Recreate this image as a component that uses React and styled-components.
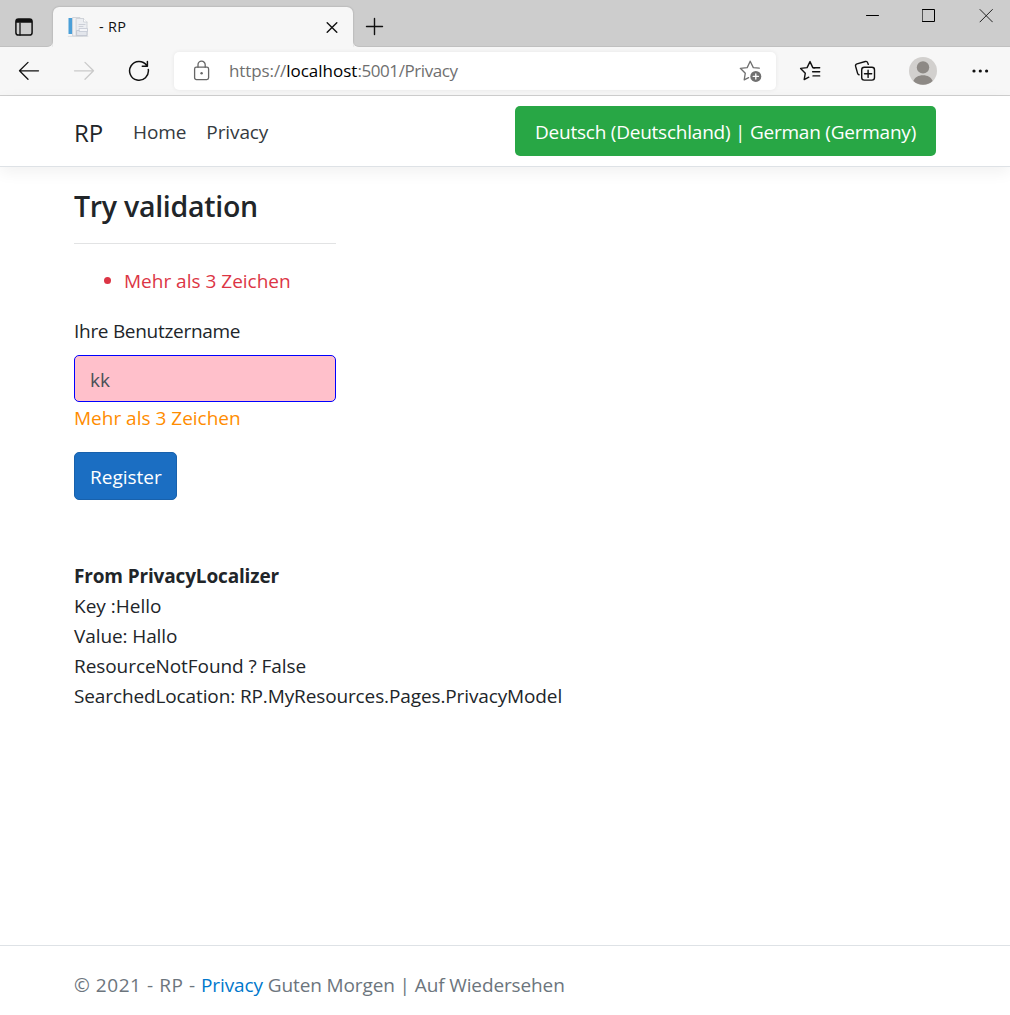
import React from "react";
import styled, { createGlobalStyle } from "styled-components";

const Global = createGlobalStyle`
  *, *::before, *::after { box-sizing: border-box; }
  html, body { margin: 0; padding: 0; overflow: hidden; }
  body {
    background: #fff;
    color: #212529;
    font-family: "Open Sans", "Noto Sans", sans-serif;
    font-size: 19px;
    line-height: 30px;
  }
`;

const Text = styled.span`
  white-space: pre;
  line-height: 1;
  vertical-align: ${(p) => (p.$drop === undefined ? -1 : -p.$drop)}px;
  letter-spacing: ${(p) => p.$ls || 0}px;
`;

const Icon = styled.svg`
  display: block;
  flex: none;
  fill: none;
  stroke: ${(p) => p.$color || "#111"};
  stroke-width: ${(p) => p.$weight || 1.3};
  stroke-linecap: round;
  stroke-linejoin: round;
`;

const Page = styled.div`
  width: 1010px;
  height: 1015px;
  display: flex;
  flex-direction: column;
  overflow: hidden;
`;

/* Browser chrome */
const TabStrip = styled.div`
  height: 47px;
  background: #f7f7f7;
  display: flex;
  flex: none;
`;
const TabMenu = styled.div`
  width: 53px;
  display: flex;
  align-items: flex-start;
  padding: 18px 0 0 15px;
  background: #cdcdcd;
  border-bottom: 1px solid #c0c0c0;
  border-bottom-right-radius: 6px;
`;
const TabWell = styled.div`
  background: #cdcdcd;
  padding-top: 7px;
`;
const Tab = styled.div`
  width: 300px;
  height: 40px;
  background: #f7f7f7;
  border-radius: 6px 6px 0 0;
  box-shadow: 0 0 2px rgba(0, 0, 0, 0.25);
  clip-path: inset(-3px -3px 0 -3px);
  display: flex;
  align-items: center;
  padding: 0 15px 0 14px;
`;
const TabTitle = styled.div`
  flex: 1;
  font-size: 14.5px;
  line-height: 20px;
  color: #111;
  padding-left: 10px;
`;
const StripRest = styled.div`
  flex: 1;
  display: flex;
  justify-content: space-between;
  align-items: flex-start;
  padding: 8px 17px 0 12px;
  background: #cdcdcd;
  border-bottom: 1px solid #c0c0c0;
  border-bottom-left-radius: 6px;
`;
const NewTab = styled.div`
  padding-top: 9px;
`;
const WindowButtons = styled.div`
  display: flex;
  gap: 43px;
`;
const Toolbar = styled.div`
  height: 49px;
  background: #f7f7f7;
  border-bottom: 1px solid #cfcfcf;
  display: flex;
  align-items: center;
  flex: none;
  padding-left: 18px;
`;
const NavButtons = styled.div`
  display: flex;
  align-items: center;
  gap: 33px;
  width: 156px;
`;
const Address = styled.div`
  width: 602px;
  height: 38px;
  background: #fff;
  border-radius: 5px;
  box-shadow: 0 0 4px rgba(0, 0, 0, 0.07);
  display: flex;
  align-items: center;
  padding: 0 13px 0 19px;
`;
const Url = styled.div`
  flex: 1;
  padding-left: 19px;
  font-size: 17px;
  line-height: 24px;
  color: #6f6f6f;
`;
const Host = styled.b`
  font-weight: 400;
  color: #000;
`;
const Tools = styled.div`
  display: flex;
  align-items: center;
  gap: 33px;
  padding-left: 23px;
`;

/* Site */
const Header = styled.header`
  height: 71px;
  border-bottom: 1px solid #dee2e6;
  box-shadow: 0 5px 15px rgba(0, 0, 0, 0.06);
  padding: 0 74px;
  display: flex;
  align-items: center;
  flex: none;
`;
const Brand = styled.a`
  font-size: 24px;
  width: 59px;
`;
const NavLink = styled.a`
  color: #343a40;
  margin-right: 20px;
`;
const Culture = styled.div`
  margin-left: auto;
  width: 421px;
  height: 50px;
  border-radius: 5px;
  background: #28a745;
  color: #fff;
  padding: 10px 20px;
`;
const Main = styled.main`
  flex: 1;
  padding: 20px 74px 0;
`;
const Form = styled.form`
  width: 262px;
`;
const Title = styled.h4`
  margin: 0;
  font-size: 28.5px;
  line-height: 36px;
  font-weight: 600;
`;
const Rule = styled.hr`
  border: 0;
  border-top: 1px solid #e2e3e4;
  margin: 20px 0 21px;
`;
const Errors = styled.ul`
  margin: 0 0 20px;
  padding-left: 50px;
  color: #dc3545;
`;
const Label = styled.label`
  display: block;
  margin-bottom: 10px;
`;
const Input = styled.div`
  height: 47px;
  border: 1px solid #0000ff;
  border-radius: 5px;
  background: #ffc0cb;
  color: #495057;
  padding: 8px 15px;
`;
const FieldError = styled.div`
  color: #ff8c00;
  margin-bottom: 20px;
`;
const Submit = styled.button`
  display: block;
  width: 103px;
  height: 48px;
  background: #1b6ec2;
  border: 1px solid #1861ac;
  border-radius: 5px;
  color: #fff;
  font: inherit;
  padding: 0 0 0 15px;
  text-align: left;
`;
const Info = styled.section`
  margin-top: 60px;
`;
const Line = styled.div`
  font-weight: ${(p) => (p.$bold ? 700 : 400)};
`;
const Footer = styled.footer`
  height: 70px;
  border-top: 1px solid #dee2e6;
  padding: 0 74px;
  line-height: 77px;
  color: #6c757d;
  flex: none;
`;
const Link = styled.a`
  color: #0077cc;
`;

export default function App() {
  return (
    <Page>
      <Global />
      <TabStrip>
        <TabMenu>
          <Icon width="18" height="18" viewBox="0 0 18 18" $weight={1.5}>
            <rect x="0.9" y="0.9" width="16.2" height="16.2" rx="2.6" />
            <path d="M1 4.7V3a2 2 0 0 1 2-2h12a2 2 0 0 1 2 2v1.7z" fill="#111" stroke="none" />
            <path d="M5 5v12" strokeWidth="1.3" />
          </Icon>
        </TabMenu>
        <TabWell>
          <Tab>
            <Icon width="22" height="22" viewBox="0 0 22 22" $weight={0.8} $color="#c9cdd3">
              <path d="M6 1.5h7l3 3V20H6z" fill="#f1f2f4" />
              <path d="M9.5 2.5h7l3.5 3.5v14H9.5z" fill="#eceef2" />
              <path d="M16.5 2.5V6H20" fill="#fff" />
              <path d="M12 8.5h6M12 10.5h4" stroke="#c3c7cf" />
              <path d="M10 14.5h10v5H10z" fill="#e3e6ec" stroke="#bcc1cd" />
              <path d="M12.5 12.5h8v3h-8z" fill="#f4f5f8" stroke="#c3c8d3" />
              <rect x="1.5" y="2" width="3.6" height="16" fill="#4a9fd8" stroke="none" />
              <path d="M1.3 20.4h19.6" stroke="#d6d9dd" />
            </Icon>
            <TabTitle><Text $drop={0} $ls={0.3}>- RP</Text></TabTitle>
            <Icon width="12" height="12" viewBox="0 0 12 12" $weight={1.4}>
              <path d="M1.2 1.7l9.6 9.6M10.8 1.7L1.2 11.3" />
            </Icon>
          </Tab>
        </TabWell>
        <StripRest>
          <NewTab>
            <Icon width="19" height="19" viewBox="0 0 19 19" $weight={1.4}>
              <path d="M9.5 1.5v16M1.5 9.5h16" />
            </Icon>
          </NewTab>
          <WindowButtons>
            <Icon width="14" height="15" viewBox="0 0 14 15" $weight={1} $color="#000">
              <path d="M1.5 7.5h12" />
            </Icon>
            <Icon width="14" height="15" viewBox="0 0 14 15" $weight={1} $color="#000">
              <rect x="0.5" y="1.5" width="12" height="12" />
            </Icon>
            <Icon width="14" height="15" viewBox="0 0 14 15" $weight={1} $color="#222">
              <path d="M1 1.5l12.4 12.4M13.4 1.5L1 13.9" />
            </Icon>
          </WindowButtons>
        </StripRest>
      </TabStrip>

      <Toolbar>
        <NavButtons>
          <Icon width="22" height="22" viewBox="0 0 22 22">
            <path d="M1.5 10.8h19M10 2.4L1.5 10.8L10 19.2" />
          </Icon>
          <Icon width="22" height="22" viewBox="0 0 22 22" $color="#cacaca">
            <path d="M1.5 10.8h19M12 2.4l8.5 8.4L12 19.2" />
          </Icon>
          <Icon width="22" height="22" viewBox="0 0 22 22" $weight={1.5}>
            <path d="M20.3 9.4A9.4 9.4 0 1 1 18.6 5.3M19.4 1.6V6.2H14.3" />
          </Icon>
        </NavButtons>
        <Address>
          <Icon width="17" height="22" viewBox="0 0 17 22" $color="#666">
            <rect x="1.6" y="7.2" width="14" height="12.4" rx="1.8" />
            <path d="M5 7.2V4.8a3.6 3.6 0 0 1 7.2 0v2.4" />
            <circle cx="8.6" cy="13.3" r="1.2" fill="#666" stroke="none" />
          </Icon>
          <Url>
            <Text $drop={0} $ls={-0.1}>https://</Text>
            <Host><Text $drop={0}>localhost</Text></Host>
            <Text $drop={0} $ls={-0.42}>:5001/Privacy</Text>
          </Url>
          <Icon width="24" height="24" viewBox="0 0 24 24" $color="#707070">
            <path transform="translate(0.3 0.4)" d="M20 8.8L14 8.2L10.9 1.8L7.9 8.2L1 8.9L6 13.8L4.9 20.4L9.3 18.2" />
            <circle cx="16.8" cy="17.4" r="5.5" fill="#707070" stroke="none" />
            <path d="M16.8 14.8v5.2M14.2 17.4h5.2" stroke="#fff" />
          </Icon>
        </Address>
        <Tools>
          <Icon width="22" height="22" viewBox="0 0 22 22" $weight={1.4}>
            <path d="M15.8 7.8L13.8 7.6L11 1.6L8.1 7.6L1.6 8.4L6.3 13.2L5.2 19.6L9.8 17.2" />
            <path d="M14.3 7.8h6.4M13.6 11.8h7.1M14 15.9h6.7" />
          </Icon>
          <Icon width="22" height="22" viewBox="0 0 22 22" $weight={1.4}>
            <rect x="7.7" y="7.3" width="12.8" height="12.8" rx="2.6" />
            <path d="M14.1 10.2v7.2M10.5 13.8h7.2" />
            <path d="M14.3 4.4L13.7 2.8A2 2 0 0 0 11.3 1.5L3 3.8A2 2 0 0 0 1.6 6.2L3.6 13.4A2 2 0 0 0 5 14.8" />
          </Icon>
          <Icon width="28" height="28" viewBox="0 0 28 28">
            <circle cx="14" cy="14" r="14" fill="#d2d0ce" stroke="none" />
            <circle cx="14" cy="10.4" r="6.2" fill="#8d8985" stroke="none" />
            <path d="M4.4 24C5.8 20.4 9.4 18.3 14 18.3S22.2 20.4 23.6 24A14 14 0 0 1 4.4 24z" fill="#8d8985" stroke="none" />
          </Icon>
          <Icon width="20" height="22" viewBox="0 0 20 22">
            <g fill="#111" stroke="none">
              <circle cx="4" cy="11" r="1.6" />
              <circle cx="10.3" cy="11" r="1.6" />
              <circle cx="16.6" cy="11" r="1.6" />
            </g>
          </Icon>
        </Tools>
      </Toolbar>

      <Header>
        <Brand><Text $drop={2}>RP</Text></Brand>
        <NavLink><Text $ls={-0.1}>Home</Text></NavLink>
        <NavLink><Text $ls={-0.1}>Privacy</Text></NavLink>
        <Culture><Text $ls={-0.23}>Deutsch (Deutschland) | German (Germany)</Text></Culture>
      </Header>

      <Main>
        <Form>
          <Title><Text $ls={-0.27}>Try validation</Text></Title>
          <Rule />
          <Errors><li><Text>Mehr als 3 Zeichen</Text></li></Errors>
          <Label><Text $ls={-0.29}>Ihre Benutzername</Text></Label>
          <Input><Text>kk</Text></Input>
          <FieldError><Text>Mehr als 3 Zeichen</Text></FieldError>
          <Submit type="button"><Text>Register</Text></Submit>
        </Form>
        <Info>
          <Line $bold><Text $ls={-0.15}>From PrivacyLocalizer</Text></Line>
          <Line><Text>Key :Hello</Text></Line>
          <Line><Text $ls={-0.1}>Value: Hallo</Text></Line>
          <Line><Text $ls={-0.07}>ResourceNotFound ? False</Text></Line>
          <Line><Text $ls={-0.12}>SearchedLocation: RP.MyResources.Pages.PrivacyModel</Text></Line>
        </Info>
      </Main>

      <Footer>
        <Text $ls={0.55}>{"© 2021 - RP - "}</Text>
        <Link><Text $ls={-0.1}>Privacy</Text></Link>
        <Text $ls={-0.12}>{" Guten Morgen | Auf Wiedersehen"}</Text>
      </Footer>
    </Page>
  );
}
